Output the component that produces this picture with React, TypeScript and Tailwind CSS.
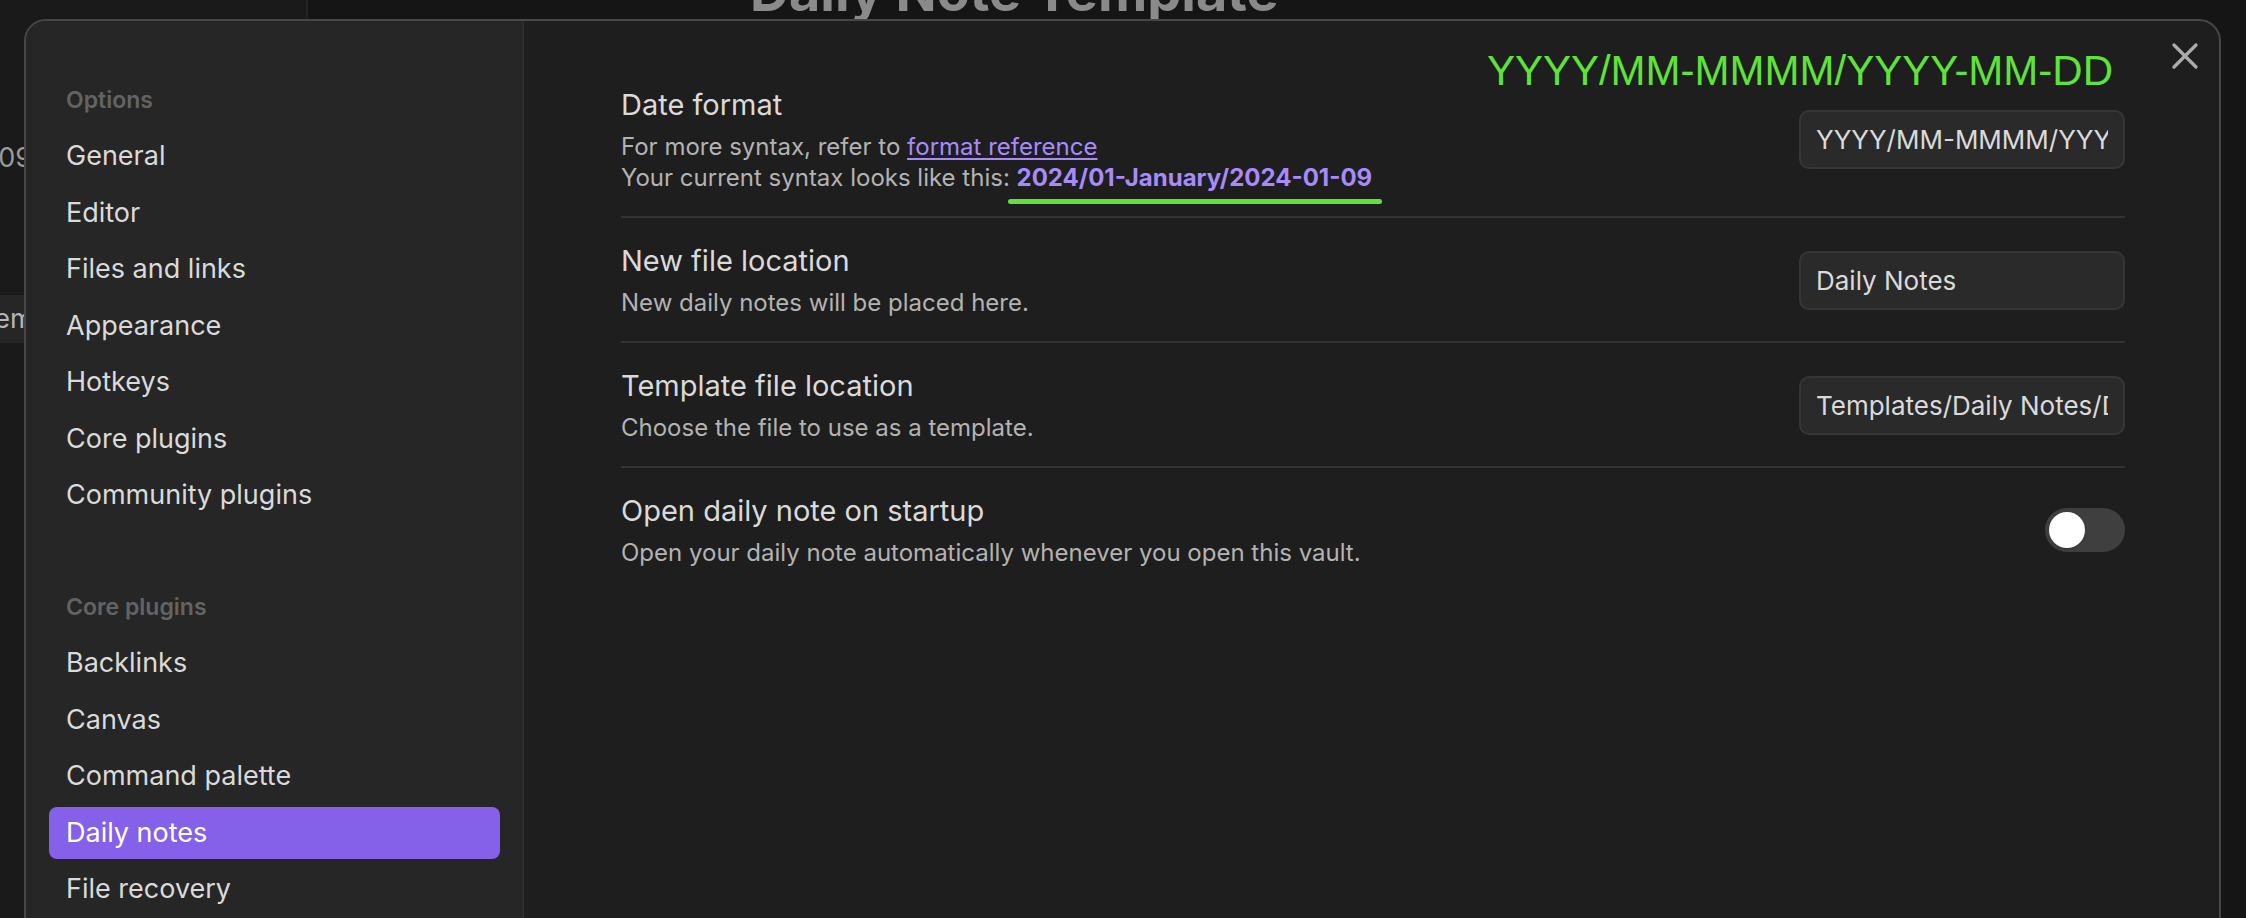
import { X } from 'lucide-react';

const OPTIONS = ['General', 'Editor', 'Files and links', 'Appearance', 'Hotkeys', 'Core plugins', 'Community plugins'];
const CORE = ['Backlinks', 'Canvas', 'Command palette', 'Daily notes', 'File recovery', 'Files', 'Graph view'];

const FONT = { fontFamily: 'Inter, "Noto Sans", sans-serif' };

function NavGroup({ title, items, active }: { title: string; items: string[]; active?: string }) {
  return (
    <div className="flex flex-col gap-[4.5px]">
      <div className="h-[52px] flex items-center px-[17px] text-[23px] font-semibold text-[#636363]">{title}</div>
      {items.map((item) => (
        <div
          key={item}
          className={`h-[52px] shrink-0 flex items-center px-[17px] rounded-[8px] text-[27px] ${
            item === active ? 'bg-[#8560e8] text-white' : 'text-[#dadada]'
          }`}>
          {item}
        </div>
      ))}
    </div>
  );
}

function SettingRow({
  name,
  desc,
  first,
  children
}: {
  name: string;
  desc: React.ReactNode;
  first?: boolean;
  children: React.ReactNode;
}) {
  return (
    <div className={`flex items-center gap-8 pt-[24px] pb-[23px] ${first ? '' : 'border-t-2 border-[#333333]'}`}>
      <div className="flex-1 min-w-0">
        <div className="text-[29px] leading-[38px] text-[#dadada]">{name}</div>
        <div className="mt-[7px] text-[24px] leading-[31px] text-[#b3b3b3]">{desc}</div>
      </div>
      {children}
    </div>
  );
}

function TextInput({ value }: { value: string }) {
  return (
    <input
      readOnly
      value={value}
      className="w-[326px] h-[59px] shrink-0 rounded-[10px] border-2 border-[#363636] bg-[#2a2a2a] px-[15px] text-[26px] text-[#dadada] outline-none"
    />
  );
}

export default function App() {
  return (
    <div className="relative w-[2246px] h-[918px] overflow-hidden bg-[#151515]" style={FONT}>
      {/* app behind the settings modal */}
      <div className="flex h-full">
        <div className="w-[308px] h-full bg-[#1a1a1a] border-r-2 border-[#242424] flex flex-col pt-[138px]">
          <div className="h-[40px] flex items-center justify-end w-[32px] text-[27px] text-[#9a9a9a] whitespace-nowrap">
            2024-01-09
          </div>
          <div className="mt-[117px] h-[48px] bg-[#262626] flex items-center whitespace-nowrap text-[27px] text-[#b5b5b5]">
            <span className="ml-[-21px]">Template</span>
          </div>
        </div>
        <div className="flex-1 pl-[442px]">
          <h1 className="mt-[-40px] text-[54px] leading-[64px] font-bold text-[#8a8a8a] whitespace-nowrap">
            Daily Note Template
          </h1>
        </div>
      </div>

      {/* settings modal */}
      <div className="absolute left-[24px] top-[19px] w-[2197px] h-[960px] flex rounded-[22px] border-2 border-[#474747] bg-[#1e1e1e] overflow-hidden">
        <div className="w-[498px] shrink-0 bg-[#262626] border-r border-[#333333] px-[23px] pt-[53px] flex flex-col gap-[59.5px]">
          <NavGroup title="Options" items={OPTIONS} />
          <NavGroup title="Core plugins" items={CORE} active="Daily notes" />
        </div>

        <div className="flex-1 pl-[97px] pr-[94px] pt-[41px]">
          <SettingRow
            first
            name="Date format"
            desc={
              <>
                <div>
                  For more syntax, refer to{' '}
                  <span className="text-[#a88bfa] underline underline-offset-[3px]">format reference</span>
                </div>
                <div>
                  Your current syntax looks like this:{' '}
                  <span className="font-bold text-[#a88bfa]">2024/01-January/2024-01-09</span>
                </div>
              </>
            }>
            <TextInput value="YYYY/MM-MMMM/YYYY-MM-DD" />
          </SettingRow>
          <SettingRow name="New file location" desc="New daily notes will be placed here.">
            <TextInput value="Daily Notes" />
          </SettingRow>
          <SettingRow name="Template file location" desc="Choose the file to use as a template.">
            <TextInput value="Templates/Daily Notes/Daily Note Template" />
          </SettingRow>
          <SettingRow name="Open daily note on startup" desc="Open your daily note automatically whenever you open this vault.">
            <div className="w-[80px] h-[44px] shrink-0 rounded-full bg-[#3f3f3f] p-[4px]">
              <div className="w-[36px] h-[36px] rounded-full bg-white shadow" />
            </div>
          </SettingRow>
        </div>

        <button className="absolute right-[12px] top-[13px] text-[#ababab]" aria-label="Close">
          <X size={44} strokeWidth={1.8} />
        </button>
      </div>

      {/* green annotations */}
      <div
        className="absolute right-[133px] top-[50px] text-[42px] leading-[42px] text-[#5fe23a] whitespace-nowrap"
        style={{ fontFamily: '"Liberation Sans", Arial, sans-serif' }}>
        YYYY/MM-MMMM/YYYY-MM-DD
      </div>
      <div className="absolute left-[1008px] top-[199px] w-[374px] h-[5px] rounded-full bg-[#5fe23a]" />
    </div>
  );
}
